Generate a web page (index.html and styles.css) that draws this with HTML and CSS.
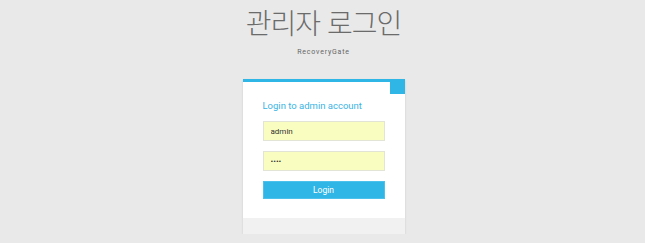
FILE: index.html
```html
<!DOCTYPE html>
<html lang="ko">
<head>
    <meta charset="UTF-8">
    <meta name="viewport" content="width=device-width, initial-scale=1.0">
    <title>관리자 로그인 - RecoveryGate</title>
    <link rel="stylesheet" href="styles.css">
</head>
<body>
    <div class="header">
        <h1>관리자 로그인</h1>
        <p class="brand">RecoveryGate</p>
    </div>

    <div class="login-card">
        <span class="corner"></span>
        <div class="login-body">
            <h2>Login to admin account</h2>
            <form class="login-form" onsubmit="return false;">
                <input type="text" name="username" value="admin">
                <input type="password" name="password" value="1234">
                <button type="submit">Login</button>
            </form>
        </div>
        <div class="login-footer"></div>
    </div>
</body>
</html>
```

FILE: styles.css
```css
body {
    margin: 0;
    padding: 0 0 0 2px;
    background: #e9e9e9;
    font-family: Roboto, "Noto Sans", sans-serif;
    color: #666;
}

.header {
    text-align: center;
    padding-top: 6px;
}

.header h1 {
    margin: 0;
    font-family: "Noto Sans CJK KR", sans-serif;
    font-weight: 200;
    font-size: 28px;
    line-height: 32px;
    letter-spacing: -1px;
    color: #6b6b6b;
}

.brand {
    margin: 9px 0 0;
    font-size: 7px;
    line-height: 10px;
    letter-spacing: 0.8px;
    color: #666;
}

.login-card {
    position: relative;
    width: 162px;
    margin: 22px auto 0;
    background: #fff;
    border-top: 3px solid #2fb5e6;
    box-shadow: 0 1px 2px rgba(0, 0, 0, 0.12);
}

.corner {
    position: absolute;
    top: -3px;
    right: 0;
    width: 15px;
    height: 15px;
    background: #2fb5e6;
}

.login-body {
    padding: 17px 20px 19px;
}

.login-body h2 {
    margin: 0 0 8px;
    font-size: 9.5px;
    font-weight: 400;
    line-height: 14px;
    color: #3ab4e4;
}

.login-form input {
    display: block;
    box-sizing: border-box;
    width: 122px;
    height: 20px;
    margin: 0 0 10px;
    padding: 0 7px;
    border: 1px solid #e2e4d6;
    background: #fafdc0;
    font-family: Roboto, sans-serif;
    font-size: 8px;
    color: #333;
    outline: none;
}

.login-form button {
    display: block;
    width: 122px;
    height: 18px;
    margin-top: 9px;
    padding: 0;
    border: 1px solid #4cc1ec;
    background: #2fb5e6;
    font-family: Roboto, sans-serif;
    font-size: 8.5px;
    color: #fff;
    cursor: pointer;
}

.login-footer {
    height: 16px;
    background: #f1f1f1;
}
```
